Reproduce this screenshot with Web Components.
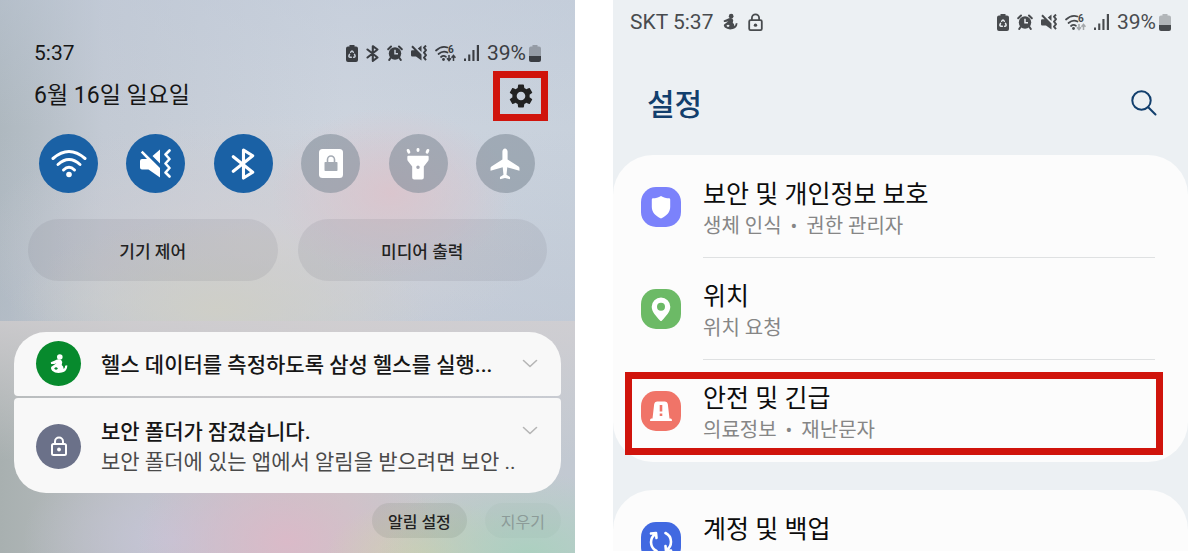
<!DOCTYPE html>
<html lang="ko">
<head>
<meta charset="utf-8">
<meta name="viewport" content="width=device-width, initial-scale=1">
<title>설정</title>
<style>
  body {
    margin: 0;
    background: #fff;
    font-family: Roboto, 'Noto Sans CJK KR', sans-serif;
  }
</style>
</head>
<body>
<phone-guide></phone-guide>

<script>
const ICONS = {
  wifi: ['0 0 36 29', `
    <g fill="none" stroke="currentColor" stroke-width="3" stroke-linecap="round">
      <path d="M2 9.500Q18-4.500 34 9.500"/><path d="M7 15.500Q18 5.500 29 15.500"/><path d="M12.500 21Q18 15.500 23.500 21"/>
    </g>
    <circle cx="18" cy="25.500" r="2.800" fill="currentColor"/>`],
  mute: ['0 0 32 29', `
    <path fill="currentColor" d="M0 12a2 2 0 0 1 2-2h5L.8 3.600 2.600 1.800 20 19v9.500L8.500 20.500H2a2 2 0 0 1-2-2zM20 .5v14L12.500 7z"/>
    <path fill="none" stroke="currentColor" stroke-width="2.600" stroke-linecap="round" stroke-linejoin="round" d="M29.500 1.500 25.500 5.500l4 4.500-4 4.500 4 4.500-4 4.500 4 4"/>`],
  muteSmall: ['0 0 16 16', `
    <path fill="currentColor" d="M0 6.500a1.200 1.200 0 0 1 1.200-1.200h2.300L.3 2 1.700.6 10.500 9.500v6L5 11.500H1.200A1.200 1.200 0 0 1 0 10.300zM10.500.5v6.500L6.800 3.500z"/>
    <path fill="none" stroke="currentColor" stroke-width="1.900" stroke-linejoin="round" d="M15 .5l-2 2.200 2 2.500-2 2.500 2 2.500-2 2.500 2 2.500"/>`],
  bluetooth: ['0 0 24 33', `
    <path fill="none" stroke="currentColor" stroke-width="3.200" stroke-linecap="round" stroke-linejoin="round" d="M2 9l20 16-9.500 6v-29L22 8 2 24"/>`],
  bluetoothSmall: ['0 0 13 17', `
    <path fill="none" stroke="currentColor" stroke-width="2.100" stroke-linecap="round" stroke-linejoin="round" d="M1.500 4.500l10 8-4.700 3.300V1.200l4.700 3.300-10 8"/>`],
  rotateLock: ['0 0 24 29', `
    <rect width="24" height="29" rx="3.500" fill="currentColor"/>
    <rect x="5.500" y="13" width="13" height="9" rx=".8" fill="var(--cutout)"/>
    <path fill="none" stroke="var(--cutout)" stroke-width="1.600" d="M8.500 14v-3.500a3.500 3.500 0 0 1 7 0V14"/>`],
  flashlight: ['0 0 24 33', `
    <path fill="currentColor" fill-rule="evenodd" d="M2 8h20q1 0 1 1v2.500q0 1-.6 1.800L18 19v11.500a2 2 0 0 1-2 2H8a2 2 0 0 1-2-2V19l-4.400-5.700Q1 12.500 1 11.500V9q0-1 1-1zm10 10a1.800 1.800 0 1 0 0 3.600 1.800 1.800 0 0 0 0-3.600z"/>
    <g stroke="currentColor" stroke-width="3" stroke-linecap="round"><path d="M1.800 2.500l.8 1.800M12 1.500v1M22.200 2.500l-.8 1.800"/></g>`],
  airplane: ['1 1.500 21 21', `
    <path fill="currentColor" d="M21 16.500v-1.800q0-.7-.6-1.100L13.200 9V3.800c0-1-.8-2-1.700-2s-1.700 1-1.700 2V9l-7.200 4.600q-.6.4-.6 1.100v1.800l8-2.300.5 4.800-2.300 1.600V22l3.300-.8 3.300.8v-1.400L12.500 19l.5-4.800z"/>`],
  gear: ['2 2 20 20', `
    <path fill="currentColor" d="M19.140 12.940c.04-.3.06-.61.06-.94 0-.32-.02-.64-.07-.94l2.030-1.580a.49.49 0 0 0 .12-.61l-1.920-3.320a.488.488 0 0 0-.59-.22l-2.390.96c-.5-.38-1.030-.7-1.620-.94l-.36-2.540a.484.484 0 0 0-.48-.41h-3.840c-.24 0-.43.17-.47.41l-.36 2.540c-.59.24-1.130.57-1.620.94l-2.390-.96c-.22-.08-.47 0-.59.22L2.740 8.870c-.12.21-.08.47.12.61l2.030 1.580c-.05.3-.09.63-.09.94s.02.64.07.94l-2.030 1.580a.49.49 0 0 0-.12.61l1.920 3.320c.12.22.37.29.59.22l2.390-.96c.5.38 1.030.7 1.620.94l.36 2.540c.05.24.24.41.48.41h3.840c.24 0 .44-.17.47-.41l.36-2.540c.59-.24 1.130-.56 1.620-.94l2.390.96c.22.08.47 0 .59-.22l1.920-3.320c.12-.22.07-.47-.12-.61l-2.010-1.580zM12 15.600c-1.980 0-3.600-1.620-3.600-3.600s1.620-3.600 3.600-3.600 3.600 1.620 3.600 3.600-1.620 3.600-3.600 3.600z"/>`],
  health: ['0 0 18 20', `
    <circle cx="9.800" cy="3" r="2.800" fill="currentColor"/>
    <path fill="currentColor" fill-rule="evenodd" d="M.8 8.300Q5 6.600 7 5.600 11.500 4.500 12.300 8l-.6 3q2.200 1.500 1.800 4 1.800-.8 1.500-3.300l2.200-.5q.6 5.800-5.400 7.300-6 1.300-9.600-1.800-2.600-3.500.3-4.700L6.500 9.200q-3 1.200-5.400.8zM6 13.300a1.700 1.200 0 1 0 .1 0z"/>`],
  lock: ['0 0 16 20', `
    <g fill="none" stroke="currentColor" stroke-width="2"><rect x="1" y="8" width="14" height="11" rx="1.500"/><path d="M4 8V5.500a4 4 0 0 1 8 0V8"/></g>
    <circle cx="8" cy="13.500" r="1.900" fill="currentColor"/>`],
  recycle: ['0 0 12 17', `
    <path fill="currentColor" d="M3.500 0h5v1.500H10a2 2 0 0 1 2 2V15a2 2 0 0 1-2 2H2a2 2 0 0 1-2-2V3.500a2 2 0 0 1 2-2h1.500z"/>
    <path fill="none" stroke="var(--cutout)" stroke-width="1.500" stroke-linejoin="round" stroke-linecap="round" d="M4.700 7.300Q6 4.500 7.300 7.300M8.500 9.300q1.600 2.900-.9 2.900M3.500 9.300q-1.600 2.900.9 2.900h.9"/>`],
  alarm: ['0 0 16 16', `
    <circle cx="8" cy="8.500" r="6.200" fill="currentColor"/>
    <g fill="none" stroke="currentColor" stroke-width="2" stroke-linecap="round"><path d="M1.200 4.200 4 1.500M14.800 4.200 12 1.500M3.500 13l-1.300 2M12.500 13l1.300 2"/></g>
    <path fill="none" stroke="var(--cutout)" stroke-width="1.500" d="M8 4.800v4h3"/>`],
  wifi6: ['0 0 21 17', `
    <g fill="none" stroke="currentColor" stroke-width="1.700" stroke-linecap="round">
      <path d="M1 5.500Q6.500.5 12.500 2.500"/><path d="M3.500 9Q8 5 12.500 7.500"/><path d="M6 12Q8.500 9.800 11 11.800"/>
    </g>
    <circle cx="8.500" cy="14.500" r="1.400" fill="currentColor"/>
    <text x="13" y="8" font-family="Roboto" font-size="10" font-weight="700" fill="currentColor">6</text>
    <path fill="none" stroke="var(--traffic, currentColor)" stroke-width="1.500" d="M14 10v5.500M12 13.200l2 2.300 2-2.300M18.500 16v-5.500M16.500 12.700l2-2.300 2 2.300"/>`],
  signal: ['0 0 15 16', `
    <path fill="currentColor" d="M0 13.500h2V16H0zM4.200 9.500h2.100V16H4.200zM8.400 5h2.100v11H8.400zM12.800 0H15v16h-2.200z"/>`],
  battery: ['0 0 12 17', `
    <path fill="currentColor" opacity=".35" d="M3.500 0h5v1.500H10a2 2 0 0 1 2 2V11H0V3.500a2 2 0 0 1 2-2h1.500z"/>
    <path fill="currentColor" d="M0 11h12v4a2 2 0 0 1-2 2H2a2 2 0 0 1-2-2z"/>`],
  chevron: ['0 0 16 9', `
    <path fill="none" stroke="currentColor" stroke-width="1.600" stroke-linecap="round" stroke-linejoin="round" d="M1.500 1.500 8 7.500l6.500-6"/>`],
  search: ['0 0 26 26', `
    <g fill="none" stroke="currentColor" stroke-width="2" stroke-linecap="round"><circle cx="10.500" cy="10.500" r="9.200"/><path d="M17.200 17.200 24.500 24.500"/></g>`],
  shield: ['0 0 40 40', `
    <path fill="currentColor" d="M20 9c2.500 1.700 5.500 2.300 8 2.300q1.200 0 1.200 1.200v7.500c0 5-3.500 9-9.200 11.500-5.700-2.500-9.200-6.500-9.200-11.500v-7.500q0-1.200 1.200-1.200C14.500 11.300 17.500 10.700 20 9z"/>`],
  pin: ['0 0 40 40', `
    <path fill="currentColor" fill-rule="evenodd" d="M20 8.500a9.300 9.300 0 0 0-9.300 9.300c0 5 4.500 9.500 8.300 13.800q1 1 2 0c3.800-4.300 8.300-8.800 8.300-13.800A9.300 9.300 0 0 0 20 8.500zm0 5.300a4 4 0 1 1 0 8 4 4 0 0 1 0-8z"/>`],
  siren: ['0 0 40 40', `
    <path fill="currentColor" fill-rule="evenodd" d="M16 10.500h8q2.500 0 2.800 2.500l1.700 14.500h1.200q1.200 0 1.200 1.500v1H9.100v-1q0-1.500 1.200-1.500h1.200L13.200 13q.3-2.500 2.800-2.500zM18.700 14v6.500h2.600V14zm0 8.500V25h2.600v-2.500z"/>`],
  sync: ['0 0 40 40', `
    <g fill="none" stroke="currentColor" stroke-width="2.600" stroke-linecap="round" stroke-linejoin="round">
      <path d="M15.500 29A9.800 9.800 0 0 1 14.500 12M10 11.500l5-.5.5 5"/>
      <path d="M24.500 11A9.800 9.800 0 0 1 25.500 28M30 28.500l-5 .5-.5-5"/>
    </g>`]
};

class UiIcon extends HTMLElement {
  constructor() {
    super();
    this.attachShadow({ mode: 'open' });
  }

  connectedCallback() {
    const [viewBox, shapes] = ICONS[this.getAttribute('name')];
    this.shadowRoot.innerHTML = `
      <style>
        :host { display: block; flex: none; }
        svg { display: block; width: 100%; height: 100%; }
      </style>
      <svg viewBox="${viewBox}" aria-hidden="true">${shapes}</svg>
    `;
  }
}

class StatusBar extends HTMLElement {
  constructor() {
    super();
    this.attachShadow({ mode: 'open' });
  }

  connectedCallback() {
    const icons = this.getAttribute('icons').split(' ');
    this.shadowRoot.innerHTML = `
      <style>
        :host {
          display: flex;
          align-items: center;
          justify-content: space-between;
          height: 24px;
          font-size: 21px;
          line-height: 24px;
        }
        .start { display: flex; align-items: center; gap: 10px; }
        .end { display: flex; align-items: center; gap: 8px; }
        .battery { display: flex; align-items: center; gap: 3px; }
        ui-icon { width: 16px; height: 16px; }
        ui-icon[name="recycle"], ui-icon[name="battery"] { width: 12px; height: 17px; }
        ui-icon[name="bluetoothSmall"] { width: 13px; height: 17px; }
        ui-icon[name="wifi6"] { width: 21px; height: 17px; }
        ui-icon[name="signal"] { width: 15px; }
      </style>
      <div class="start"><slot></slot></div>
      <div class="end">
        ${icons.map((name) => `<ui-icon name="${name}"></ui-icon>`).join('')}
        <span class="battery">39%<ui-icon name="battery"></ui-icon></span>
      </div>
    `;
  }
}

class QuickTile extends HTMLElement {
  constructor() {
    super();
    this.attachShadow({ mode: 'open' });
  }

  connectedCallback() {
    const on = this.hasAttribute('on');
    this.shadowRoot.innerHTML = `
      <style>
        :host { display: block; --cutout: #a5abb4; }
        button {
          display: grid;
          place-items: center;
          width: 59px;
          height: 59px;
          padding: 0;
          border: 0;
          border-radius: 50%;
          background: rgba(130, 142, 154, 0.58);
          color: #fff;
          cursor: pointer;
        }
        button[aria-pressed="true"] { background: #1a61a5; }
        ui-icon { width: 32px; height: 32px; }
        ui-icon[name="wifi"] { width: 36px; height: 29px; }
        ui-icon[name="mute"], ui-icon[name="rotateLock"] { height: 29px; }
      </style>
      <button type="button" aria-pressed="${on}" aria-label="${this.getAttribute('label')}">
        <ui-icon name="${this.getAttribute('icon')}"></ui-icon>
      </button>
    `;
  }
}

class NoticeCard extends HTMLElement {
  constructor() {
    super();
    this.attachShadow({ mode: 'open' });
  }

  connectedCallback() {
    this.shadowRoot.innerHTML = `
      <style>
        :host {
          display: grid;
          grid-template-columns: 45px minmax(0, 1fr) 16px;
          column-gap: 20px;
          align-items: center;
          padding: 9px 23px 10px 22px;
          background: #f8f8f8;
          color: #161616;
        }
        .badge {
          display: grid;
          place-items: center;
          height: 45px;
          border-radius: 50%;
          background: var(--badge);
          color: #fff;
        }
        ui-icon { width: 18px; height: 20px; }
        .text { padding-top: 2px; font-size: 21px; line-height: 30px; white-space: nowrap; }
        ::slotted(strong) { display: block; font-weight: 500; }
        ::slotted(span) { display: block; color: #4a4a4a; }
        button {
          display: grid;
          place-items: center;
          align-self: var(--chevron-align, center);
          width: 16px;
          height: 30px;
          padding: 0;
          border: 0;
          background: none;
          color: #b5b5b5;
          cursor: pointer;
        }
        button ui-icon { width: 16px; height: 9px; }
      </style>
      <div class="badge"><ui-icon name="${this.getAttribute('icon')}"></ui-icon></div>
      <div class="text"><slot></slot></div>
      <button type="button" aria-label="펼치기"><ui-icon name="chevron"></ui-icon></button>
    `;
  }
}

class QuickPanel extends HTMLElement {
  constructor() {
    super();
    this.attachShadow({ mode: 'open' });
  }

  connectedCallback() {
    this.shadowRoot.innerHTML = `
      <style>
        :host {
          display: flex;
          flex-direction: column;
          overflow: hidden;
          color: #161616;
          --cutout: #c8cfda;
        }
        button { font-family: inherit; border: 0; padding: 0; cursor: pointer; }
        .controls {
          flex: none;
          padding: 41px 28px 40px;
          background:
            radial-gradient(120px 85px at 68% 60%, rgba(219, 196, 204, 0.9), rgba(219, 196, 204, 0)),
            radial-gradient(210px 90px at 38% 96%, rgba(207, 207, 199, 0.95), rgba(207, 207, 199, 0)),
            radial-gradient(280px 130px at 45% 76%, rgba(211, 208, 212, 0.85), rgba(211, 208, 212, 0)),
            linear-gradient(180deg, rgba(190, 200, 216, 0.4), rgba(205, 212, 222, 0) 40%, rgba(184, 192, 206, 0.4)),
            linear-gradient(90deg, #aeb8bf 0, #c3cad4 18%, #cdd4de 60%, #c8d1dc 100%);
        }
        status-bar { padding: 0 6px; color: #3a3d42; }
        .time { color: #161616; }
        .date {
          display: flex;
          align-items: center;
          justify-content: space-between;
          height: 50px;
          margin: 6px -1px 13px 0;
          padding-left: 6px;
          font-size: 23px;
          line-height: 26px;
        }
        .settings {
          display: grid;
          place-items: center;
          width: 55px;
          height: 50px;
          border: 7px solid #d0140c;
          background: none;
          color: #222;
        }
        .settings ui-icon { width: 24px; height: 24px; }
        .tiles { display: flex; justify-content: space-between; padding: 0 12px 0 11px; }
        .pills { display: grid; grid-template-columns: 1fr 1fr; gap: 20px; margin-top: 26px; }
        .pills button {
          height: 62px;
          border-radius: 31px;
          background: rgba(120, 122, 132, 0.15);
          color: #222;
          font-size: 17px;
          font-weight: 500;
        }
        .notices {
          flex: 1;
          padding: 11px 14px 0;
          background:
            radial-gradient(150px 80px at 92% 100%, rgba(172, 208, 192, 1), rgba(172, 208, 192, 0)),
            radial-gradient(100px 60px at 74% 102%, rgba(210, 206, 178, 1), rgba(210, 206, 178, 0)),
            radial-gradient(150px 110px at 50% 95%, rgba(218, 186, 200, 1), rgba(218, 186, 200, 0)),
            radial-gradient(150px 90px at 30% 94%, rgba(196, 196, 214, 1), rgba(196, 196, 214, 0)),
            linear-gradient(180deg, rgba(210, 207, 210, 0.8) 0, rgba(210, 207, 210, 0) 60%),
            linear-gradient(90deg, #a8b0b0 0, #bec1c4 25%, #c8c8ca 60%, #c2c9d2 100%);
        }
        .list { display: grid; gap: 2px; }
        notice-card:first-child { border-radius: 32px 32px 4px 4px; }
        notice-card:last-child {
          border-radius: 4px 4px 32px 32px;
          padding-top: 17px;
          padding-bottom: 16px;
        }
        .actions { display: flex; justify-content: flex-end; gap: 18px; margin-top: 10px; }
        .actions button {
          height: 35px;
          padding: 0 16px;
          border-radius: 18px;
          background: rgba(100, 110, 100, 0.14);
          color: #222;
          font-size: 16px;
          font-weight: 500;
        }
        .actions button:disabled {
          background: rgba(100, 130, 120, 0.05);
          color: #8c9b98;
          font-weight: 400;
        }
      </style>
      <section class="controls">
        <status-bar icons="recycle bluetoothSmall alarm muteSmall wifi6 signal"><span class="time">5:37</span></status-bar>
        <div class="date">
          <span>6월 16일 일요일</span>
          <button class="settings" type="button" aria-label="설정"><ui-icon name="gear"></ui-icon></button>
        </div>
        <div class="tiles">
          <quick-tile icon="wifi" label="와이파이" on></quick-tile>
          <quick-tile icon="mute" label="진동" on></quick-tile>
          <quick-tile icon="bluetooth" label="블루투스" on></quick-tile>
          <quick-tile icon="rotateLock" label="화면 고정"></quick-tile>
          <quick-tile icon="flashlight" label="손전등"></quick-tile>
          <quick-tile icon="airplane" label="비행기 탑승 모드"></quick-tile>
        </div>
        <div class="pills">
          <button type="button">기기 제어</button>
          <button type="button">미디어 출력</button>
        </div>
      </section>
      <section class="notices">
        <div class="list">
          <notice-card icon="health" style="--badge: #078a2d">
            <strong>헬스 데이터를 측정하도록 삼성 헬스를 실행...</strong>
          </notice-card>
          <notice-card icon="lock" style="--badge: #6b7189; --chevron-align: start">
            <strong>보안 폴더가 잠겼습니다.</strong>
            <span>보안 폴더에 있는 앱에서 알림을 받으려면 보안 ..</span>
          </notice-card>
        </div>
        <div class="actions">
          <button type="button">알림 설정</button>
          <button type="button" disabled>지우기</button>
        </div>
      </section>
    `;
  }
}

class SettingsRow extends HTMLElement {
  constructor() {
    super();
    this.attachShadow({ mode: 'open' });
  }

  connectedCallback() {
    this.shadowRoot.innerHTML = `
      <style>
        :host { display: block; position: relative; }
        a {
          display: flex;
          align-items: center;
          gap: 22px;
          padding-left: 28px;
          color: #0c0c0c;
          text-decoration: none;
        }
        ui-icon {
          width: 40px;
          height: 40px;
          border-radius: 15px;
          background: var(--tint);
          color: #fff;
        }
        .text {
          flex: 1;
          box-sizing: border-box;
          height: 102px;
          margin-right: 33px;
          padding-top: 22px;
          border-bottom: 1px solid transparent;
        }
        :host([divided]) .text { border-color: #dfe1e2; }
        .title { font-size: 25px; line-height: 34px; }
        .detail { display: flex; gap: 9px; color: #868686; font-size: 20px; line-height: 28px; }
        /* red frame over the row that has to be tapped */
        :host([marked])::after {
          content: '';
          position: absolute;
          inset: 12px 25px 7px 12px;
          border: 7px solid #d0140c;
          pointer-events: none;
        }
      </style>
      <a href="#">
        <ui-icon name="${this.getAttribute('icon')}"></ui-icon>
        <div class="text">
          <div class="title"><slot name="title"></slot></div>
          <div class="detail"><slot></slot></div>
        </div>
      </a>
    `;
  }
}

class SettingsScreen extends HTMLElement {
  constructor() {
    super();
    this.attachShadow({ mode: 'open' });
  }

  connectedCallback() {
    this.shadowRoot.innerHTML = `
      <style>
        :host {
          display: block;
          overflow: hidden;
          margin-bottom: 2px;
          background: #ecf0f3;
          --cutout: #ecf0f3;
          --traffic: #a4a8ab;
        }
        status-bar { padding: 10px 17px 0; color: #484b4e; }
        status-bar > ui-icon { width: 15px; height: 18px; }
        header {
          display: flex;
          align-items: center;
          justify-content: space-between;
          height: 44px;
          margin: 47px 31px 30px 34px;
          color: #123f6d;
        }
        h1 { margin: 0; padding-top: 4px; font-size: 30px; font-weight: 500; line-height: 40px; }
        button { padding: 0; border: 0; background: none; color: inherit; cursor: pointer; }
        button ui-icon { width: 26px; height: 26px; }
        .group {
          margin-bottom: 28px;
          padding-top: 1px;
          border-radius: 40px;
          background: #fcfcfc;
        }
      </style>
      <status-bar icons="recycle alarm muteSmall wifi6 signal">
        <span>SKT 5:37</span>
        <ui-icon name="health"></ui-icon>
        <ui-icon name="lock"></ui-icon>
      </status-bar>
      <header>
        <h1>설정</h1>
        <button type="button" aria-label="검색"><ui-icon name="search"></ui-icon></button>
      </header>
      <div class="group">
        <settings-row icon="shield" style="--tint: #7b82fb" divided>
          <span slot="title">보안 및 개인정보 보호</span>
          <span>생체 인식</span><span>•</span><span>권한 관리자</span>
        </settings-row>
        <settings-row icon="pin" style="--tint: #6cba66" divided>
          <span slot="title">위치</span>
          <span>위치 요청</span>
        </settings-row>
        <settings-row icon="siren" style="--tint: #f07468" marked>
          <span slot="title">안전 및 긴급</span>
          <span>의료정보</span><span>•</span><span>재난문자</span>
        </settings-row>
      </div>
      <div class="group">
        <settings-row icon="sync" style="--tint: #4169e1">
          <span slot="title">계정 및 백업</span>
        </settings-row>
      </div>
    `;
  }
}

class PhoneGuide extends HTMLElement {
  constructor() {
    super();
    this.attachShadow({ mode: 'open' });
  }

  connectedCallback() {
    this.shadowRoot.innerHTML = `
      <style>
        :host {
          display: grid;
          grid-template-columns: repeat(2, minmax(0, 1fr));
          grid-template-rows: 100vh;
          gap: 38px;
          padding-right: 12px;
        }
      </style>
      <quick-panel></quick-panel>
      <settings-screen></settings-screen>
    `;
  }
}

customElements.define('ui-icon', UiIcon);
customElements.define('status-bar', StatusBar);
customElements.define('quick-tile', QuickTile);
customElements.define('notice-card', NoticeCard);
customElements.define('quick-panel', QuickPanel);
customElements.define('settings-row', SettingsRow);
customElements.define('settings-screen', SettingsScreen);
customElements.define('phone-guide', PhoneGuide);
</script>
</body>
</html>
